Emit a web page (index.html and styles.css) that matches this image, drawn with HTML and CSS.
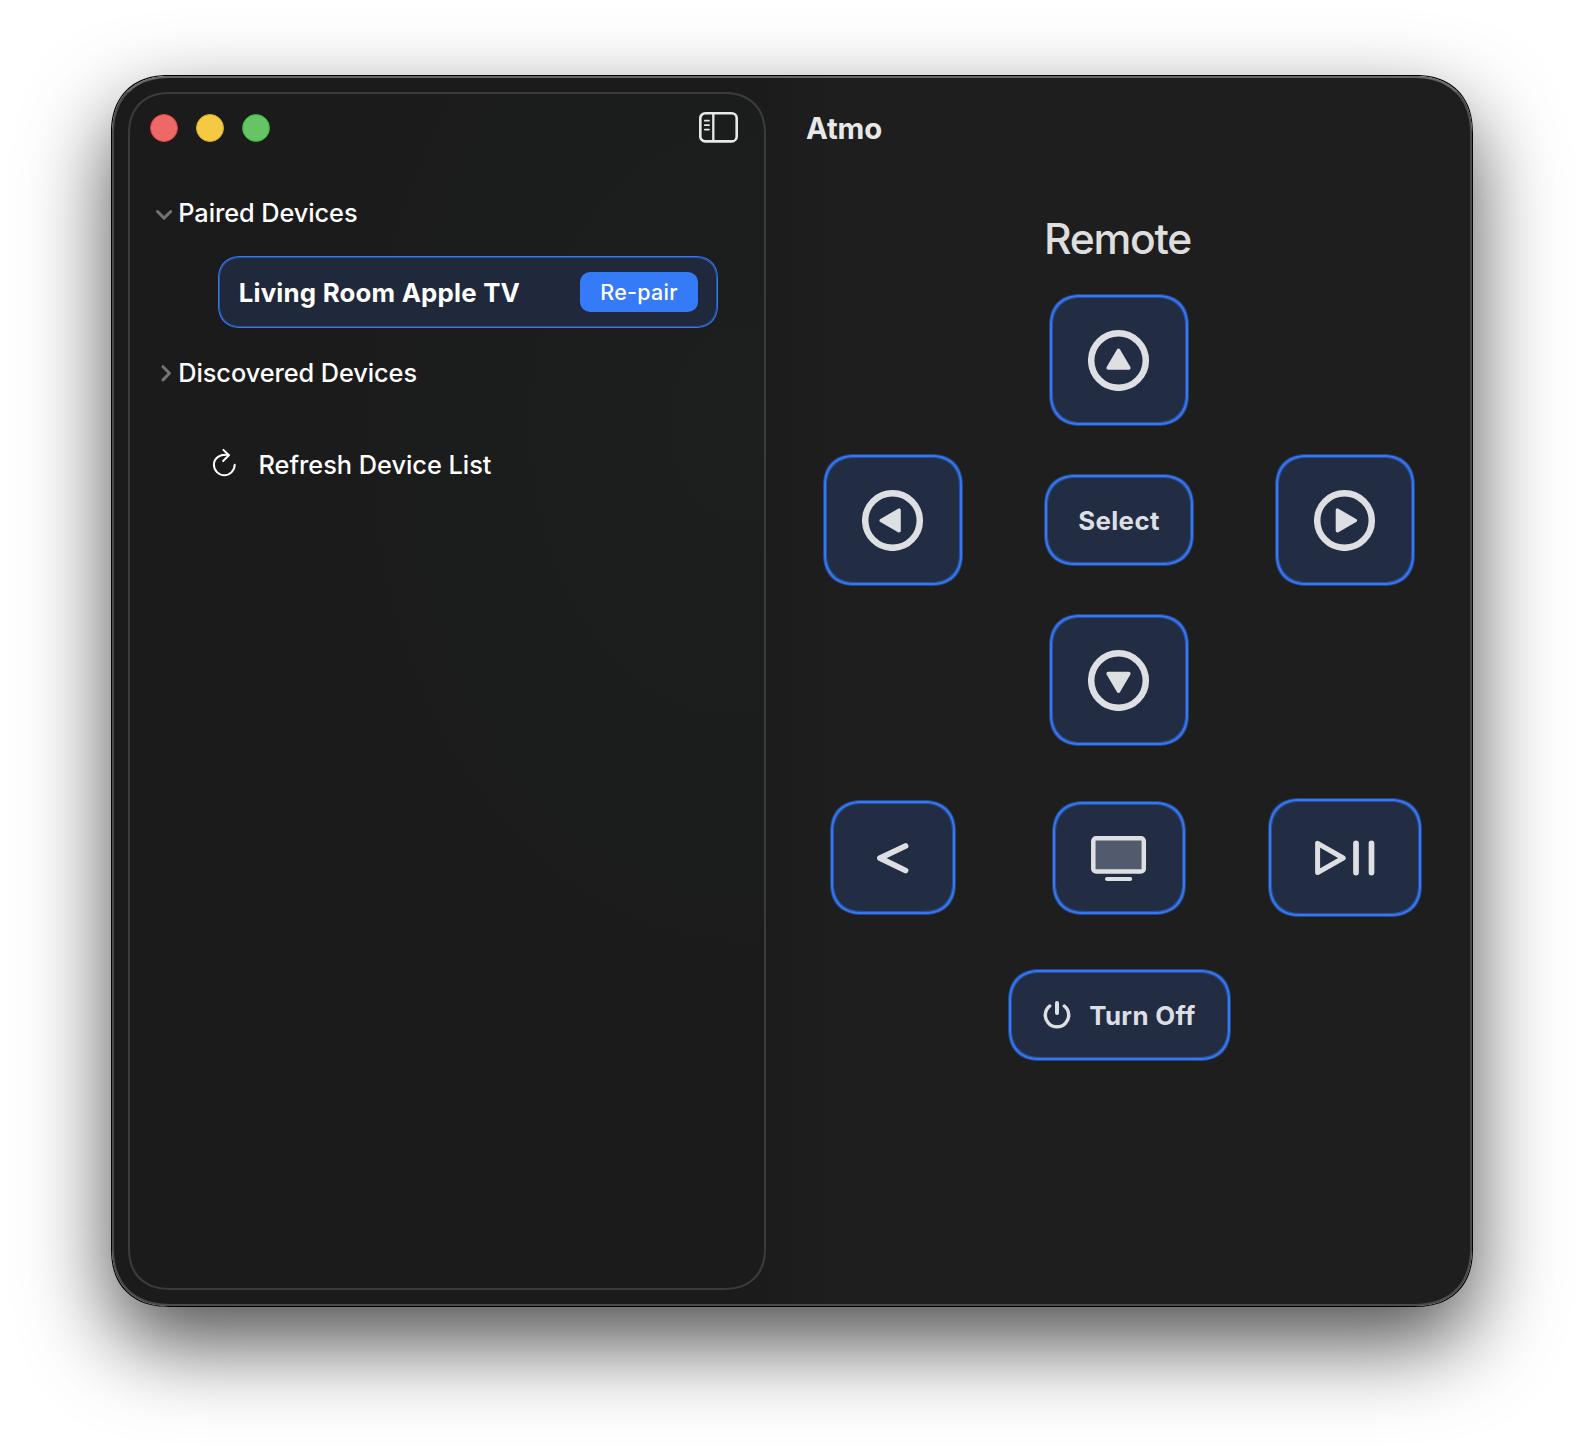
FILE: index.html
```html
<!DOCTYPE html>
<html lang="en">
<head>
<meta charset="utf-8">
<title>Atmo</title>
<link rel="stylesheet" href="styles.css">
</head>
<body>
<div class="window">
  <aside class="sidebar">
    <header class="toolbar">
      <span class="light light-close"></span>
      <span class="light light-minimize"></span>
      <span class="light light-zoom"></span>
      <svg class="toggle" width="40" height="32" viewBox="0 0 40 32" fill="none" stroke="#e9e9e9">
        <rect x="1.300" y="1.300" width="36.4" height="28.100" rx="5" stroke-width="2.6"/>
        <path d="M14.300 1v28.500" stroke-width="2.3"/>
        <path d="M5.800 8.700h4.200M5.800 13.200h4.200M5.800 17.600h4.200" stroke-width="1.700" stroke-linecap="round"/>
      </svg>
    </header>
    <div class="section">
      <svg class="chevron" width="24" height="24" viewBox="0 0 24 24"><path d="M5.500 10.500l6.600 6.600 6.600-6.600"/></svg>
      <span class="label">Paired Devices</span>
    </div>
    <div class="device">
      <span class="device-name">Living Room Apple TV</span>
      <button class="repair">Re-pair</button>
    </div>
    <div class="section">
      <svg class="chevron" width="24" height="24" viewBox="0 0 24 24"><path d="M11 5.700l6.500 6.600-6.500 6.600"/></svg>
      <span class="label">Discovered Devices</span>
    </div>
    <div class="refresh">
      <svg width="26" height="32" viewBox="0 0 26 32" fill="none" stroke="#fff" stroke-width="2" stroke-linecap="round" stroke-linejoin="round">
        <path d="M16.700 8C8 6.400 1.900 11.400 1.900 17.800A10.400 10.400 0 0 0 22.700 17.800"/>
        <path d="M11.400 2.900l5.500 5.400-5.800 5.700"/>
      </svg>
      <span class="label">Refresh Device List</span>
    </div>
  </aside>

  <main class="remote">
    <header class="title">Atmo</header>
    <h1 class="heading">Remote</h1>
    <div class="pad">
      <button class="key arrow up" aria-label="Up">
        <svg width="62" height="62" viewBox="-30.5 -31.5 62 62"><circle r="27.300"/><path d="M0-10.200L10.300 7.500H-10.300z"/></svg>
      </button>
      <button class="key arrow left" aria-label="Left">
        <svg width="62" height="62" viewBox="-30.5 -31.5 62 62"><circle r="27.300"/><path d="M-11.200 0L6.500-10.300V10.300z"/></svg>
      </button>
      <button class="key select">Select</button>
      <button class="key arrow right" aria-label="Right">
        <svg width="62" height="62" viewBox="-30.5 -31.5 62 62"><circle r="27.300"/><path d="M10.700 0L-7-10.300V10.300z"/></svg>
      </button>
      <button class="key arrow down" aria-label="Down">
        <svg width="62" height="62" viewBox="-30.5 -31.5 62 62"><circle r="27.300"/><path d="M0 10.700L10.300-7H-10.300z"/></svg>
      </button>
      <button class="key back" aria-label="Back">
        <svg width="40" height="40" viewBox="-20 -20 40 40" fill="none" stroke="#dedfe3" stroke-width="5.800" stroke-linecap="round" stroke-linejoin="round"><path d="M12.500-12L-13 .2 12.500 12.500"/></svg>
      </button>
      <button class="key tv" aria-label="TV">
        <svg width="60" height="50" viewBox="-30 -25 60 50"><rect x="-25.700" y="-19.700" width="50.500" height="33.200" rx="2.800" fill="#525a6d" stroke="#dedfe3" stroke-width="4.500"/><path d="M-12 21H11.200" stroke="#dedfe3" stroke-width="4" stroke-linecap="round"/></svg>
      </button>
      <button class="key play" aria-label="Play or pause">
        <svg width="66" height="42" viewBox="-33 -21 66 42" fill="none" stroke="#dedfe3" stroke-linecap="round" stroke-linejoin="round"><path d="M-27.400-14.700V14.600L-1.800 0z" stroke-width="5"/><path d="M11-14.600V14.600M26.500-14.600V14.600" stroke-width="5.700"/></svg>
      </button>
      <button class="key power">
        <svg width="32" height="32" viewBox="-16 -15.500 32 32" fill="none" stroke="#dedfe3" stroke-linecap="round"><path d="M-7.300-8.500A11.700 11.700 0 1 0 7.300-8.500" stroke-width="3.500"/><path d="M0-11.500V-1.500" stroke-width="4"/></svg>
        <span>Turn Off</span>
      </button>
    </div>
  </main>
</div>
</body>
</html>
```
FILE: styles.css
```css
* { box-sizing: border-box; }

body {
  margin: 0;
  height: 1454px;
  padding: 76px 112px;
  background: #fff;
  overflow: hidden;
  font-family: Inter, "Liberation Sans", sans-serif;
  color: #fff;
}

button {
  margin: 0;
  padding: 0;
  font: inherit;
  color: inherit;
}

.window {
  display: flex;
  width: 1360px;
  height: 1230px;
  padding: 14px 0 14px 14px;
  border: 2px solid #4b4b4b;
  border-top-color: #656765;
  border-radius: 58px;
  corner-shape: superellipse(1.2);
  background: linear-gradient(90deg, #1b1b1b 640px, #1e1e1e 720px);
  box-shadow: 0 0 0 1px #000, 0 36px 86px rgba(0, 0, 0, .7);
}

.sidebar {
  width: 638px;
  height: 1198px;
  border: 2px solid #3a3c3b;
  border-radius: 42px;
  corner-shape: superellipse(1.2);
  background: radial-gradient(ellipse 400px 560px at 610px 330px, #1c1f1e 0, #1b1d1c 70%, #1b1b1b 100%);
}

.toolbar {
  display: flex;
  align-items: center;
  gap: 18px;
  height: 68px;
  padding: 0 25px 0 20px;
}

.light {
  width: 28px;
  height: 28px;
  border: 1px solid;
  border-radius: 50%;
}
.light-close { background: #ef6868; border-color: #dc4040; }
.light-minimize { background: #f4c944; border-color: #dcab20; }
.light-zoom { background: #65c566; border-color: #35aa3a; }

.toggle { margin-left: auto; }

.section {
  display: flex;
  align-items: center;
  height: 45px;
  margin-top: 28px;
  padding-left: 22px;
}

.chevron {
  fill: none;
  stroke: #747474;
  stroke-width: 3;
  stroke-linecap: round;
  stroke-linejoin: round;
}

.label {
  margin-left: 2.3px;
  font-size: 25.3px;
  font-weight: 500;
  line-height: 45px;
  letter-spacing: -.06px;
  white-space: nowrap;
}

.device {
  display: flex;
  align-items: center;
  justify-content: space-between;
  width: 500px;
  height: 72px;
  margin: 21px 0 -6px 88px;
  padding: 0 19px;
  border: 1px solid #3478f6;
  border-radius: 23px;
  corner-shape: superellipse(1.2);
  background: #1f293b;
  box-shadow: inset 0 0 0 1px rgba(52, 120, 246, .5);
}

.device-name {
  margin-left: .7px;
  font-size: 25.8px;
  font-weight: 700;
  letter-spacing: .21px;
  white-space: nowrap;
}

.repair {
  width: 118px;
  height: 40px;
  border: 0;
  border-radius: 10px;
  background: #357af6;
  font-size: 21.5px;
  font-weight: 450;
  letter-spacing: .25px;
}

.refresh {
  display: flex;
  align-items: center;
  height: 46px;
  margin: 46px 0 0 82px;
}
.refresh svg { margin-top: -2px; }
.refresh .label { margin-left: 20.5px; letter-spacing: 0; }

.remote {
  flex: 1;
  padding: 0 12px 0 14px;
  color: #dedede;
}

.title {
  height: 88px;
  margin-top: -16px;
  padding: 16px 0 0 26px;
  box-sizing: content-box;
  line-height: 74px;
  font-size: 29.3px;
  font-weight: 650;
  letter-spacing: -.1px;
  color: #e8e8e8;
}

.heading {
  height: 100px;
  margin: 0;
  padding: 17px 3px 0 0;
  font-size: 42.6px;
  font-weight: 450;
  line-height: 84px;
  letter-spacing: -1.25px;
  text-align: center;
}

.pad {
  display: grid;
  grid-template-columns: repeat(3, 226px);
  grid-template-rows: 160px 160px 160px 195px 120px;
  place-items: center;
}

.key {
  display: flex;
  align-items: center;
  justify-content: center;
  border: 2px solid #3478f6;
  border-radius: 31px;
  corner-shape: superellipse(1.2);
  background: #222d44;
  box-shadow: 0 0 0 1px rgba(52, 120, 246, .48), inset 0 0 0 1px rgba(52, 120, 246, .48);
  color: #dedfe3;
  font-size: 25.8px;
  font-weight: 700;
}

.arrow { width: 138px; height: 130px; }
.arrow circle { fill: none; stroke: #dedfe3; stroke-width: 6.5px; }
.arrow path {
  fill: #dedfe3;
  stroke: #dedfe3;
  stroke-width: 3.6px;
  stroke-linejoin: round;
}

.up { grid-area: 1 / 2; }
.left { grid-area: 2 / 1; }
.right { grid-area: 2 / 3; }
.down { grid-area: 3 / 2; }

.select {
  grid-area: 2 / 2;
  width: 148px;
  height: 90px;
  letter-spacing: .4px;
}

.back { grid-area: 4 / 1; width: 124px; height: 113px; }
.tv { grid-area: 4 / 2; width: 132px; height: 112px; margin-top: 1px; }
.play { grid-area: 4 / 3; width: 152px; height: 117px; }

.power {
  grid-area: 5 / 2;
  width: 221px;
  height: 90px;
  gap: 16px;
  margin-left: 1px;
  padding-right: 2px;
  letter-spacing: .35px;
}
```
